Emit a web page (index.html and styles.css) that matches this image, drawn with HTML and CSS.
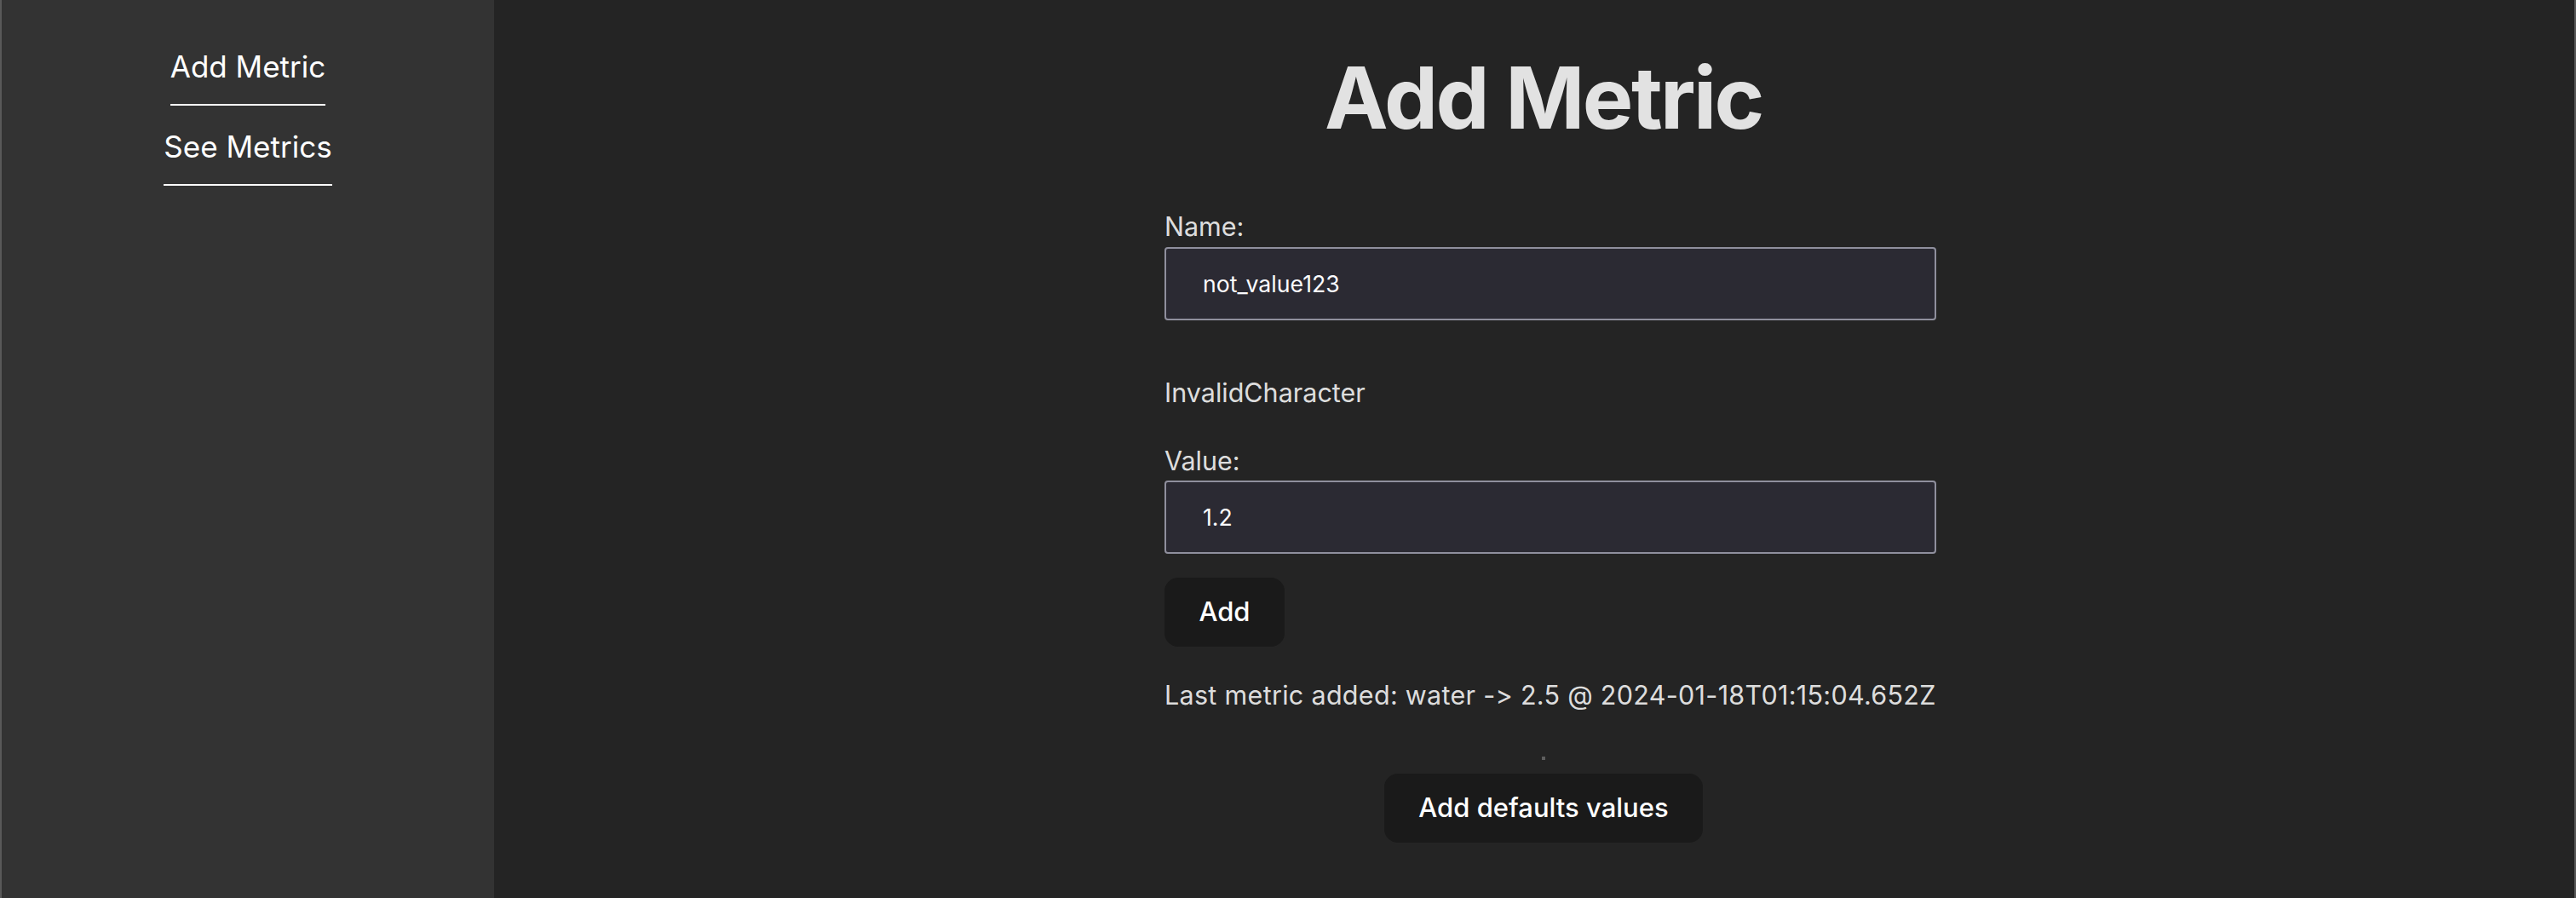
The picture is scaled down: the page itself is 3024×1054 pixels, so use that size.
FILE: index.html
```html
<!DOCTYPE html>
<html lang="en">
<head>
<meta charset="utf-8">
<title>Add Metric</title>
<link rel="stylesheet" href="styles.css">
</head>
<body>
<div class="app">
  <aside class="sidebar">
    <nav class="nav">
      <a class="nav-link" href="#">Add Metric</a>
      <a class="nav-link" href="#">See Metrics</a>
    </nav>
  </aside>
  <main class="main">
    <h1 class="title">Add Metric</h1>
    <form class="form">
      <label class="field-label" for="name">Name:</label>
      <input class="field-input" id="name" type="text" value="not_value123">
      <p class="error">InvalidCharacter</p>
      <label class="field-label field-label-second" for="value">Value:</label>
      <input class="field-input field-input-second" id="value" type="text" value="1.2">
      <button class="btn btn-add" type="button">Add</button>
      <p class="last">Last metric added: water -&gt; 2.5 @ 2024-01-18T01:15:04.652Z</p>
    </form>
    <div class="dot"></div>
    <button class="btn btn-defaults" type="button">Add defaults values</button>
  </main>
</div>
</body>
</html>
```
FILE: styles.css
```css
html, body {
  margin: 0;
  padding: 0;
  height: 100%;
  background: #242424;
}

body {
  font-family: Inter, "Noto Sans", sans-serif;
  font-feature-settings: "calt" 0;
  color: rgba(255, 255, 255, 0.87);
}

.app {
  display: flex;
  height: 100vh;
  border-left: 2px solid #595959;
  border-right: 2px solid #595959;
  box-sizing: border-box;
}

.sidebar {
  width: 578px;
  flex: none;
  background: #333333;
}

.nav {
  display: flex;
  flex-direction: column;
  align-items: center;
  gap: 21px;
  padding-top: 51px;
}

.nav-link {
  display: inline-block;
  color: #ffffff;
  text-decoration: none;
  font-size: 35px;
  line-height: 54px;
  padding-bottom: 17px;
  border-bottom: 2px solid #ffffff;
}

.main {
  flex: 1;
  display: flex;
  flex-direction: column;
  align-items: center;
  padding-left: 22px;
}

.title {
  margin: 59px 0 0;
  font-size: 100px;
  line-height: 112.6px;
  font-weight: 700;
  letter-spacing: -2.5px;
  color: rgba(255, 255, 255, 0.87);
}

.form {
  width: 906px;
  margin: 72px 0 0 16px;
  display: flex;
  flex-direction: column;
  align-items: flex-start;
}

.field-label {
  font-size: 30.5px;
  line-height: 44px;
}

.field-label-second {
  margin-top: 36px;
}

.field-input {
  box-sizing: border-box;
  width: 100%;
  height: 86px;
  margin-top: 2px;
  padding: 25px 43px;
  background: #2b2a33;
  border: 2px solid #8f8f9d;
  border-radius: 4px;
  color: #fbfbfe;
  font-family: Inter, "Noto Sans", sans-serif;
  font-feature-settings: "calt" 0;
  font-size: 26.67px;
  line-height: 32px;
  outline: none;
}

.field-input-second {
  margin-top: 1px;
}

.error {
  margin: 63px 0 0;
  font-size: 30.5px;
  line-height: 44px;
}

.last {
  margin: 35px 0 0;
  font-size: 30.5px;
  line-height: 44px;
  letter-spacing: 0.3px;
  white-space: nowrap;
}

.btn {
  box-sizing: border-box;
  font-family: Inter, "Noto Sans", sans-serif;
  font-feature-settings: "calt" 0;
  font-size: 31px;
  font-weight: 500;
  line-height: 38.7px;
  padding: 19.2px 38.4px;
  border: 2px solid transparent;
  border-radius: 16px;
  background: #1a1a1a;
  color: #ffffff;
  cursor: pointer;
}

.btn-add {
  margin-top: 28px;
}

.dot {
  width: 4px;
  height: 4px;
  margin-top: 50px;
  background: #5e5e5e;
}

.btn-defaults {
  margin-top: 16px;
}
```
